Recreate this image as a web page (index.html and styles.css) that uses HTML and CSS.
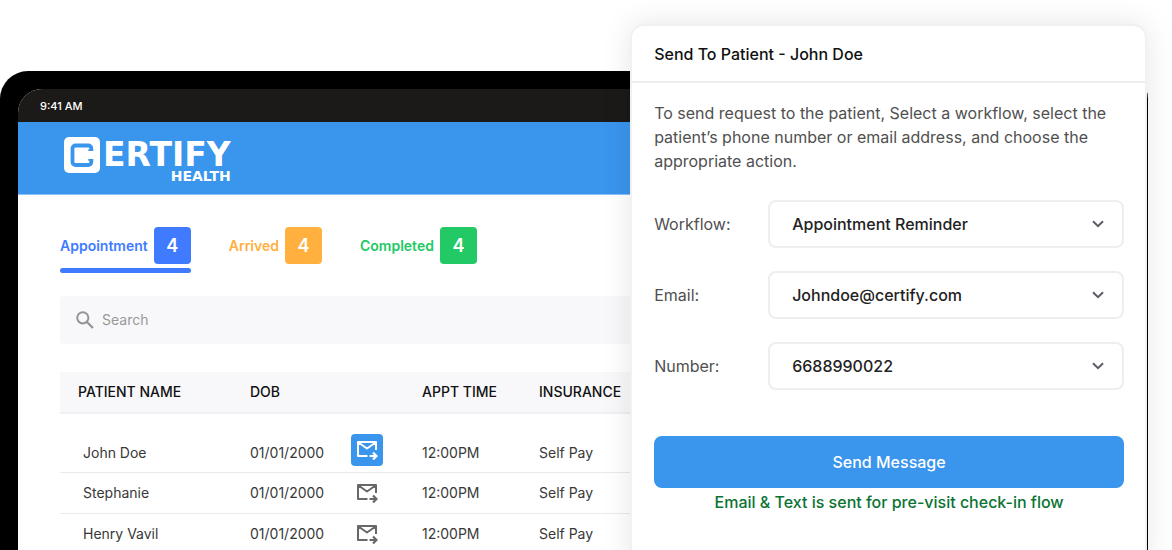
FILE: index.html
```html
<!DOCTYPE html>
<html lang="en">
<head>
<meta charset="utf-8">
<meta name="viewport" content="width=device-width, initial-scale=1">
<title>Certify Health - Appointments</title>
<link rel="stylesheet" href="styles.css">
</head>
<body>
<svg class="sprite" aria-hidden="true">
  <symbol id="mail-forward" viewBox="0 0 22 20">
    <path d="M20 10V2H2v14h9.500M2.500 2.500 11 8.500l8.500-6" fill="none" stroke="currentColor" stroke-width="2" stroke-linejoin="round"/>
    <path d="M13.500 16h6.500M17 12.500 20.500 16 17 19.500" fill="none" stroke="currentColor" stroke-width="2.200"/>
  </symbol>
  <symbol id="chevron" viewBox="0 0 12 8">
    <path d="M1 1.200 6 6.200l5-5" fill="none" stroke="currentColor" stroke-width="2"/>
  </symbol>
</svg>
<div class="stage">
  <div class="tablet">
    <div class="screen">
      <div class="status-bar">9:41 AM</div>
      <header class="brand-bar">
        <div class="logo">
          <svg class="logo-mark" viewBox="0 0 36 36" aria-hidden="true">
            <rect width="36" height="36" rx="5" fill="#fff"/>
            <path d="M27.300 13.500V11.500a3 3 0 0 0-3-3H11.500a3 3 0 0 0-3 3v13.500a3 3 0 0 0 3 3h12.800a3 3 0 0 0 3-3V22.500" fill="none" stroke="#3a95ed" stroke-width="3.800"/>
            <path d="M24.300 13.200h4.900M24.300 22.800h4.900" stroke="#3a95ed" stroke-width="1.800"/>
          </svg>
          <div class="logo-words">
            <span class="logo-name">ERTIFY</span>
            <span class="logo-sub">HEALTH</span>
          </div>
        </div>
      </header>
      <main class="content">
        <div class="tabs" role="tablist">
          <button class="tab tab-appointment" role="tab" aria-selected="true">Appointment <span class="count">4</span></button>
          <button class="tab tab-arrived" role="tab" aria-selected="false">Arrived <span class="count">4</span></button>
          <button class="tab tab-completed" role="tab" aria-selected="false">Completed <span class="count">4</span></button>
        </div>
        <div class="search">
          <svg class="search-icon" viewBox="0 0 18 18" aria-hidden="true">
            <circle cx="6.800" cy="6.800" r="5.600" fill="none" stroke="currentColor" stroke-width="2"/>
            <path d="m11 11 6 6" stroke="currentColor" stroke-width="2.200"/>
          </svg>
          <input class="search-input" type="search" placeholder="Search" aria-label="Search">
        </div>
        <table class="patients">
          <colgroup><col class="col-name"><col class="col-dob"><col class="col-send"><col class="col-time"><col></colgroup>
          <thead>
            <tr><th>PATIENT NAME</th><th>DOB</th><th></th><th>APPT TIME</th><th>INSURANCE</th></tr>
          </thead>
          <tbody>
            <tr>
              <td>John Doe</td><td>01/01/2000</td>
              <td><button class="send send-active" aria-label="Send to John Doe"><svg><use href="#mail-forward"/></svg></button></td>
              <td>12:00PM</td><td>Self Pay</td>
            </tr>
            <tr>
              <td>Stephanie</td><td>01/01/2000</td>
              <td><button class="send" aria-label="Send to Stephanie"><svg><use href="#mail-forward"/></svg></button></td>
              <td>12:00PM</td><td>Self Pay</td>
            </tr>
            <tr>
              <td>Henry Vavil</td><td>01/01/2000</td>
              <td><button class="send" aria-label="Send to Henry Vavil"><svg><use href="#mail-forward"/></svg></button></td>
              <td>12:00PM</td><td>Self Pay</td>
            </tr>
          </tbody>
        </table>
      </main>
    </div>
  </div>
  <section class="dialog" role="dialog" aria-labelledby="dialog-title">
    <h2 class="dialog-title" id="dialog-title">Send To Patient - John Doe</h2>
    <form class="dialog-body">
      <p class="intro">To send request to the patient, Select a workflow, select the patient’s phone number or email address, and choose the appropriate action.</p>
      <div class="fields">
        <label for="workflow">Workflow:</label>
        <div class="select-box">
          <select id="workflow"><option>Appointment Reminder</option></select>
          <svg class="chevron" aria-hidden="true"><use href="#chevron"/></svg>
        </div>
        <label for="email">Email:</label>
        <div class="select-box">
          <select id="email"><option>Johndoe@certify.com</option></select>
          <svg class="chevron" aria-hidden="true"><use href="#chevron"/></svg>
        </div>
        <label for="number">Number:</label>
        <div class="select-box">
          <select id="number"><option>6688990022</option></select>
          <svg class="chevron" aria-hidden="true"><use href="#chevron"/></svg>
        </div>
      </div>
      <button class="submit" type="button">Send Message</button>
      <p class="sent-note">Email &amp; Text is sent for pre-visit check-in flow</p>
    </form>
  </section>
</div>
</body>
</html>
```
FILE: styles.css
```css
* { box-sizing: border-box; }

body {
  margin: 0;
  background: #fff;
  color: #383838;
  font: 14px/20px Inter, "Liberation Sans", sans-serif;
}

button, input, select { font: inherit; }

button {
  padding: 0;
  border: 0;
  background: none;
  color: inherit;
}

.sprite { display: none; }

.stage {
  position: relative;
  display: flex;
  height: 100vh;
  overflow: hidden;
  padding: 71px 24px 0 0;
}

/* Tablet frame */
.tablet {
  flex: 1;
  padding: 18px 18px 0;
  background: #000;
  border-radius: 28px 28px 0 0;
}

.screen {
  height: 100%;
  overflow: hidden;
  background: #fff;
  border-radius: 24px 24px 0 0;
}

.status-bar {
  padding: 7px 22px 6px;
  background: #1c1a18;
  color: #fff;
  font-size: 11px;
  font-weight: 500;
}

.brand-bar {
  padding: 15px 46px 14px;
  background: #3a95ed;
  border-bottom: 1px solid #8fc1f4;
}

.logo {
  display: flex;
  gap: 3px;
}

.logo-mark {
  width: 36px;
  height: 36px;
}

.logo-words {
  display: flex;
  flex-direction: column;
  color: #fff;
  font-family: "DejaVu Sans", sans-serif;
  font-weight: 700;
}

.logo-name {
  font-size: 33px;
  line-height: 35px;
}

.logo-sub {
  align-self: flex-end;
  font-size: 14px;
  line-height: 8px;
}

.content { padding: 32px 24px 0 42px; }

/* Tabs */
.tabs {
  display: flex;
  gap: 38px;
}

.tab {
  display: flex;
  align-items: center;
  gap: 6px;
  padding-bottom: 4px;
  border-bottom: 5px solid transparent;
  font-weight: 600;
}

.tab-appointment {
  color: #407bff;
  position: relative;
}

.tab-appointment::after {
  content: "";
  position: absolute;
  inset: auto 0 -5px;
  height: 5px;
  border-radius: 3px;
  background: #407bff;
}

.tab-arrived { color: #ffb03e; }
.tab-completed { color: #22c965; }

.count {
  width: 37px;
  height: 37px;
  border-radius: 4px;
  background: currentColor;
  font-size: 18px;
  line-height: 37px;
}

.count::first-letter { color: #fff; }

/* Search */
.search {
  display: flex;
  align-items: center;
  gap: 8px;
  height: 48px;
  margin: 23px 0 28px;
  padding: 0 16px;
  border-radius: 4px;
  background: #f8f8fb;
  color: #949494;
}

.search-icon {
  width: 18px;
  height: 18px;
}

.search-input {
  flex: 1;
  padding: 0;
  border: 0;
  background: none;
  outline: 0;
}

.search-input::placeholder { color: #999; }

/* Patient table */
.patients {
  width: 100%;
  table-layout: fixed;
  border-collapse: collapse;
}

.col-name { width: 190px; }
.col-dob { width: 101px; }
.col-send { width: 71px; }
.col-time { width: 117px; }

th, td {
  padding: 0;
  text-align: left;
}

th {
  height: 41px;
  background: #f8f8fb;
  border-bottom: 2px solid #f0f0f2;
  color: #111;
  font-weight: 500;
}

th:first-child { padding-left: 18px; }
td:first-child { padding-left: 23px; }

td {
  height: 41px;
  border-bottom: 1px solid #eaeaea;
}

tbody tr:first-child td {
  height: 59px;
  padding-top: 20px;
}

.send {
  display: flex;
  align-items: center;
  justify-content: center;
  width: 32px;
  height: 32px;
  color: #66686c;
}

.send svg {
  width: 22px;
  height: 20px;
}

.send-active {
  margin-bottom: 6px;
  border-radius: 4px;
  background: #3a95ed;
  color: #fff;
}

/* Dialog */
.dialog {
  position: absolute;
  top: 24px;
  right: 25px;
  bottom: -20px;
  width: 44.1%;
  min-width: 440px;
  border: 2px solid #f1f1f1;
  border-radius: 14px;
  background: #fff;
  box-shadow: 0 0 30px rgba(0, 0, 0, 0.1);
  font-size: 16px;
  line-height: 24px;
}

.dialog-title {
  margin: 0;
  padding: 16px 22px 15px;
  border-bottom: 2px solid #eee;
  color: #111;
  font-size: 16px;
  font-weight: 500;
}

.dialog-body { padding: 18px 21px 18px 22px; }

.intro {
  margin: 0 0 27px;
  color: #505050;
}

.fields {
  display: grid;
  grid-template-columns: 114px 1fr;
  row-gap: 23px;
  align-items: center;
  color: #505050;
}

.select-box {
  display: grid;
  align-items: center;
}

.select-box > * { grid-area: 1 / 1; }

.select-box select {
  width: 100%;
  height: 48px;
  padding: 0 48px 0 22px;
  border: 2px solid #eee;
  border-radius: 8px;
  appearance: none;
  background: #fff;
  color: #222;
  font-weight: 500;
}

.chevron {
  justify-self: end;
  width: 12px;
  height: 8px;
  margin-right: 20px;
  color: #5b5d66;
  pointer-events: none;
}

.submit {
  width: 100%;
  height: 52px;
  margin-top: 46px;
  border-radius: 8px;
  background: #3a95ed;
  color: #fff;
  font-weight: 500;
}

.sent-note {
  margin: 2px 0 0;
  color: #0b7334;
  font-weight: 500;
  text-align: center;
}
```
